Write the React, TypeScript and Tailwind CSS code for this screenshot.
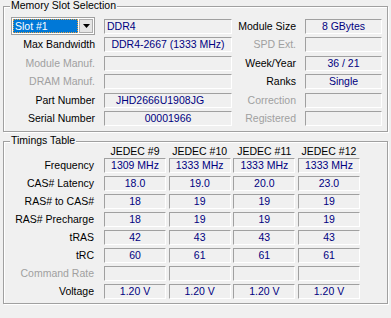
import React from "react";

const slotRows = [
  { label: "Max Bandwidth", value: "DDR4-2667 (1333 MHz)", align: "text-center", right: "SPD Ext.", rightValue: "", rightOff: true },
  { label: "Module Manuf.", value: "", off: true, right: "Week/Year", rightValue: "36 / 21" },
  { label: "DRAM Manuf.", value: "", off: true, right: "Ranks", rightValue: "Single" },
  { label: "Part Number", value: "JHD2666U1908JG", align: "text-center pr-[16px]", right: "Correction", rightValue: "", rightOff: true },
  { label: "Serial Number", value: "00001966", align: "text-center", right: "Registered", rightValue: "", rightOff: true },
];

const jedec = ["JEDEC #9", "JEDEC #10", "JEDEC #11", "JEDEC #12"];

const timings = [
  { label: "Frequency", values: ["1309 MHz", "1333 MHz", "1333 MHz", "1333 MHz"] },
  { label: "CAS# Latency", values: ["18.0", "19.0", "20.0", "23.0"] },
  { label: "RAS# to CAS#", values: ["18", "19", "19", "19"] },
  { label: "RAS# Precharge", values: ["18", "19", "19", "19"] },
  { label: "tRAS", values: ["42", "43", "43", "43"] },
  { label: "tRC", values: ["60", "61", "61", "61"] },
  { label: "Command Rate", values: ["", "", "", ""], off: true },
  { label: "Voltage", values: ["1.20 V", "1.20 V", "1.20 V", "1.20 V"] },
];

function Box({ children, className = "" }: { children?: React.ReactNode; className?: string }) {
  return (
    <div
      className={`h-[15px] overflow-hidden whitespace-nowrap border border-t-[#a0a0a0] border-l-[#a0a0a0] border-r-white border-b-white leading-[13px] text-[#000080] ${className}`}
    >
      {children}
    </div>
  );
}

function Group({ title, className = "", children }: { title: string; className?: string; children: React.ReactNode }) {
  return (
    <div className={`relative border border-[#a0a0a0] shadow-[1px_1px_0_#fff,inset_1px_1px_0_#fff] ${className}`}>
      <span className="absolute -top-[8px] left-[6px] bg-[#f0f0f0] px-[1px] leading-[12px] text-black">{title}</span>
      {children}
    </div>
  );
}

export default function App() {
  return (
    <div className="h-[318px] w-[391px] overflow-hidden bg-[#f0f0f0] px-[3px] pt-[6px] font-['Liberation_Sans',Arial,sans-serif] text-[10.5px] text-black">
      {/* Memory Slot Selection */}
      <Group title="Memory Slot Selection" className="h-[126px] w-[385px]">
        <div className="grid auto-rows-[15px] grid-cols-[93px_128px_73px_77px] gap-y-[3.4px] pl-[7px] pt-[12px]">
          <div className="-mt-[2px] flex h-[18px] w-[84px] border border-[#a0a0a0] bg-white p-[1px]">
            <div className="flex-1 border border-dotted border-[#e8a040] bg-[#0078d7] pl-[1px] leading-[13px] text-white">Slot #1</div>
            <div className="ml-[1px] mr-[0px] flex w-[14px] items-center justify-center border border-[#adadad] bg-[#e5e5e5]">
              <svg width="7" height="4" viewBox="0 0 7 4">
                <path d="M0 0h7L3.5 4z" fill="#000" />
              </svg>
            </div>
          </div>
          <Box className="pl-[2px]">DDR4</Box>
          <div className="pr-[9px] text-right leading-[15px]">Module Size</div>
          <Box className="text-center">8 GBytes</Box>

          {slotRows.map((r) => (
            <React.Fragment key={r.label}>
              <div className={`pr-[9px] text-right leading-[15px] ${r.off ? "text-[#a0a0a0]" : ""}`}>{r.label}</div>
              <Box className={r.align ?? ""}>{r.value}</Box>
              <div className={`pr-[9px] text-right leading-[15px] ${r.rightOff ? "text-[#a0a0a0]" : ""}`}>{r.right}</div>
              <Box className="text-center">{r.rightValue}</Box>
            </React.Fragment>
          ))}
        </div>
      </Group>

      {/* Timings Table */}
      <Group title="Timings Table" className="mt-[9px] h-[163px] w-[385px]">
        <div className="flex flex-col pt-[3px]">
          <div className="mb-[1px] flex h-[12px]">
            <div className="w-[100px]" />
            <div className="flex gap-[2.67px]">
              {jedec.map((j) => (
                <div key={j} className="w-[62px] text-center leading-[12px]">{j}</div>
              ))}
            </div>
          </div>
          <div className="flex flex-col gap-[3px]">
            {timings.map((t) => (
              <div key={t.label} className="flex h-[15px]">
                <div className={`w-[100px] pr-[10px] text-right leading-[15px] ${t.off ? "text-[#a0a0a0]" : ""}`}>{t.label}</div>
                <div className="flex gap-[2.67px]">
                  {t.values.map((v, i) => (
                    <Box key={i} className="w-[62px] text-center">{v}</Box>
                  ))}
                </div>
              </div>
            ))}
          </div>
        </div>
      </Group>
    </div>
  );
}
